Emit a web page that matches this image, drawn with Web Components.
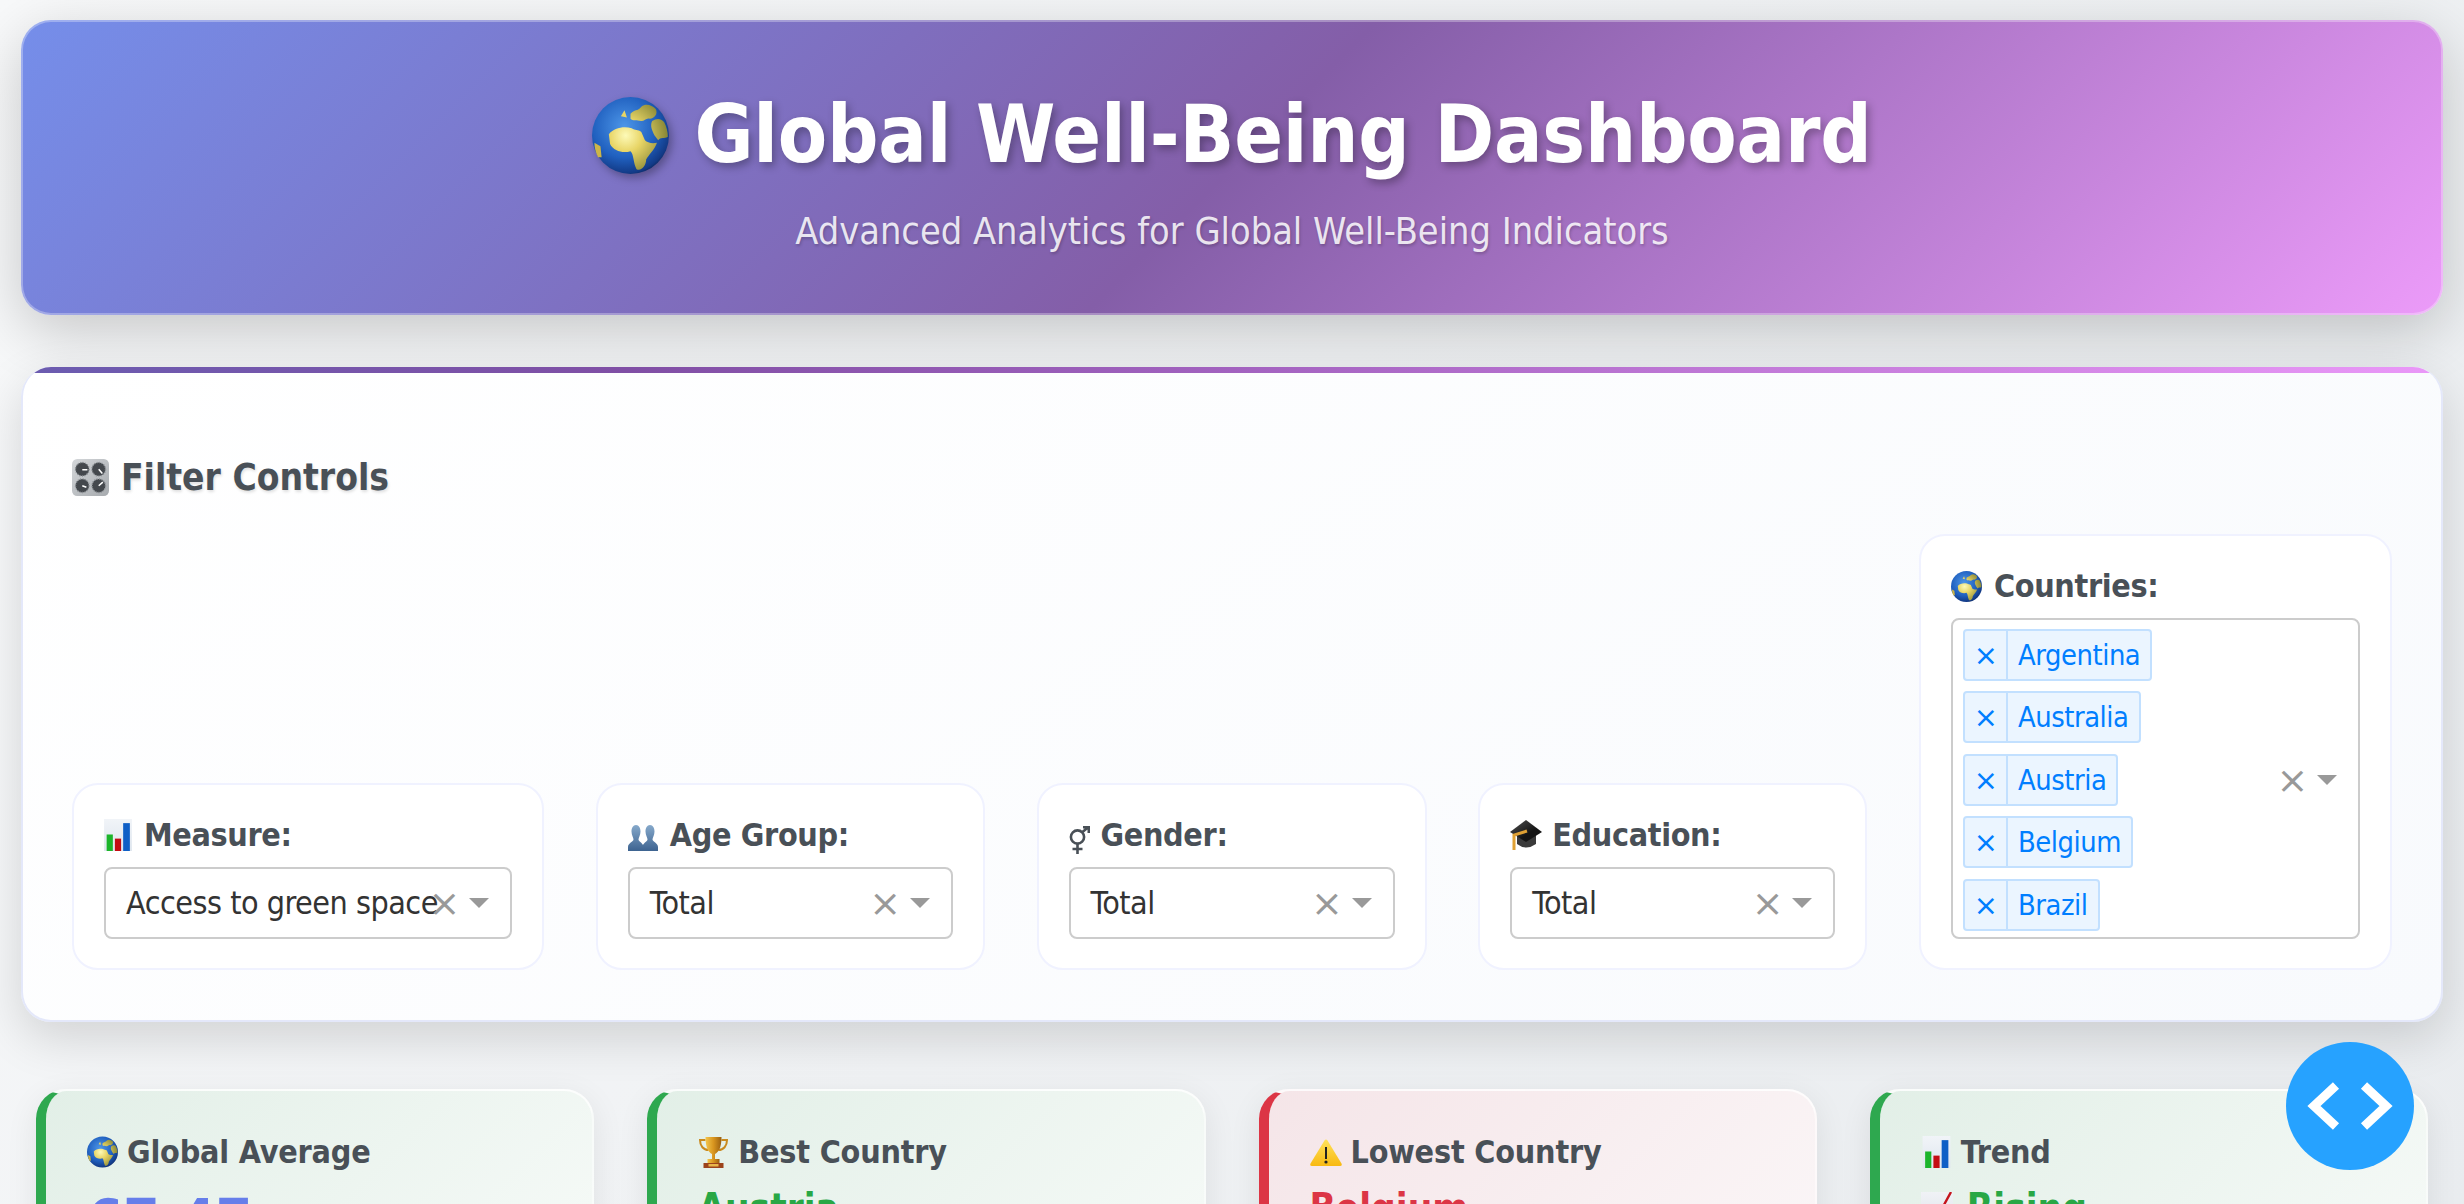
<!doctype html>
<html lang="en">
<head>
<meta charset="utf-8">
<title>Global Well-Being Dashboard</title>
<style>
html,body{margin:0;height:100%;overflow:hidden}
body{background:linear-gradient(135deg,#f8f9fa,#e9ecef);font-family:"DejaVu Sans Condensed","DejaVu Sans",sans-serif;font-stretch:condensed;color:#495057}
</style>
</head>
<body>
<wb-app>
  <wb-header title="Global Well-Being Dashboard" subtitle="Advanced Analytics for Global Well-Being Indicators"></wb-header>
  <wb-filters>
    <wb-field icon="bars" label="Measure:"><wb-select value="Access to green space"></wb-select></wb-field>
    <wb-field icon="people" label="Age Group:"><wb-select value="Total"></wb-select></wb-field>
    <wb-field icon="gender" label="Gender:"><wb-select value="Total"></wb-select></wb-field>
    <wb-field icon="cap" label="Education:"><wb-select value="Total"></wb-select></wb-field>
    <wb-field icon="globe" label="Countries:">
      <wb-multi>
        <wb-chip>Argentina</wb-chip>
        <wb-chip>Australia</wb-chip>
        <wb-chip>Austria</wb-chip>
        <wb-chip>Belgium</wb-chip>
        <wb-chip>Brazil</wb-chip>
      </wb-multi>
    </wb-field>
  </wb-filters>
  <wb-stats>
    <wb-stat icon="globe" label="Global Average" kind="good" big value="67.47"></wb-stat>
    <wb-stat icon="trophy" label="Best Country" kind="good" value="Austria"></wb-stat>
    <wb-stat icon="warning" label="Lowest Country" kind="bad" value="Belgium"></wb-stat>
    <wb-stat icon="bars" label="Trend" kind="good" value="Rising" value-icon="chart"></wb-stat>
  </wb-stats>
</wb-app>
<wb-fab></wb-fab>

<script>
// emoji drawn by hand, the installed emoji font looks too different from the reference
const ICONS = {
  globe: `<svg viewBox="0 0 64 64"><defs>
      <radialGradient id="s" cx=".42" cy=".38" r=".68"><stop offset="0" stop-color="#4d96e8"/><stop offset=".6" stop-color="#2060bf"/><stop offset=".9" stop-color="#123a86"/><stop offset="1" stop-color="#0b1f4e"/></radialGradient>
      <radialGradient id="l" gradientUnits="userSpaceOnUse" cx="28" cy="32" r="34"><stop offset="0" stop-color="#fdfab8"/><stop offset=".4" stop-color="#e8d566"/><stop offset="1" stop-color="#8c8a38"/></radialGradient>
    </defs>
    <circle cx="32" cy="32" r="32" fill="url(#s)"/>
    <path fill="url(#l)" d="M14 31C18 26 26 24 33 26C36 28 38 27 41 29L44 36C46 38 50 39 54 38C52 44 47 48 45 52C45 57 41 62 37 60C34 54 35 48 32 45C26 47 18 45 15 39Z"/>
    <path fill="url(#l)" d="M32 14C35 10 38 12 41 8C45 5 50 7 53 10C55 14 52 18 48 18C45 17 44 20 41 20C37 19 34 20 32 18Z"/>
    <path fill="url(#l)" d="M50 20C54 17 58 18 60 21C62 25 63 29 63 33C60 35 57 33 55 36L52 32C50 28 48 24 50 20Z"/>
    <path fill="#e8d566" d="M24 16L27 11L29 17Z"/>
    <path fill="#cdb548" d="M2 38L7 41L8 50L5 50C3 46 2 42 2 38Z"/>
  </svg>`,
  bars: `<svg viewBox="0 0 54 62"><defs><linearGradient id="b" x2="0" y2="1"><stop offset="0" stop-color="#f1f4f8"/><stop offset="1" stop-color="#dfe6ee"/></linearGradient></defs>
    <rect width="54" height="62" fill="url(#b)"/>
    <rect x="5" y="30" width="12" height="32" fill="#1cb52b"/>
    <rect x="21" y="38" width="12" height="24" fill="#c40d13"/>
    <rect x="37" y="8" width="13" height="54" fill="#0f5fc6"/>
  </svg>`,
  people: `<svg viewBox="0 0 60 52"><defs><linearGradient id="p" x2="0" y2="1"><stop offset="0" stop-color="#86a9cb"/><stop offset="1" stop-color="#3d6390"/></linearGradient></defs>
    <path fill="url(#p)" d="M16 0C22 0 25 6 25 13C25 20 21 26 21 29C21 33 31 36 31 44V52H0V44C0 36 11 33 11 29C11 26 7 20 7 13C7 6 10 0 16 0Z"/>
    <path fill="url(#p)" d="M44 0C50 0 53 6 53 13C53 20 49 26 49 29C49 33 60 36 60 44V52H29V44C29 36 39 33 39 29C39 26 35 20 35 13C35 6 38 0 44 0Z"/>
  </svg>`,
  gender: `<svg viewBox="0 0 21 28" fill="none" stroke="#495057" stroke-width="2.6">
    <circle cx="8.5" cy="11" r="6.6"/><path d="M8.5 17.5V28M3.5 23H13.5M13.5 6L19.5 1M14 1.2H19.8V7"/>
  </svg>`,
  cap: `<svg viewBox="0 0 32 31"><defs><linearGradient id="c" x2="1" y2="1"><stop offset="0" stop-color="#555"/><stop offset=".6" stop-color="#151515"/></linearGradient></defs>
    <path fill="#3a3a3a" d="M7 15V24Q16 31 26 24V15Z"/>
    <path fill="url(#c)" d="M16 0L32 12L16 22L0 12Z"/>
    <path fill="none" stroke="#e0a134" stroke-width="3" d="M17 11L4 15V30"/>
  </svg>`,
  trophy: `<svg viewBox="0 0 30 32"><defs><linearGradient id="t" x2="1"><stop offset="0" stop-color="#f4c64c"/><stop offset=".5" stop-color="#d8951f"/><stop offset="1" stop-color="#9a5f10"/></linearGradient></defs>
    <path fill="none" stroke="#c98a1e" stroke-width="2" d="M7 4H1.5C1.5 10 5 14 10 14M23 4H28.5C28.5 10 25 14 20 14"/>
    <path fill="url(#t)" d="M7 1H23C23 12 20 16 16.5 18V23H13.5V18C10 16 7 12 7 1Z"/>
    <rect x="9" y="23" width="12" height="4" fill="url(#t)"/>
    <rect x="5" y="27" width="20" height="5" fill="#9c431b"/>
    <rect x="10" y="28" width="10" height="2.5" fill="#e8b64a"/>
  </svg>`,
  warning: `<svg viewBox="0 0 32 27"><defs><linearGradient id="w" x2="0" y2="1"><stop offset="0" stop-color="#ffe25a"/><stop offset="1" stop-color="#f8b912"/></linearGradient></defs>
    <path fill="url(#w)" d="M14.5 1.5Q16 -.5 17.5 1.5L31.5 24.5Q32.5 27 30 27H2Q-.5 27 .5 24.5Z"/>
    <rect x="15" y="8" width="2" height="12" fill="#222"/><circle cx="16" cy="23" r="1.6" fill="#222"/>
  </svg>`,
  chart: `<svg viewBox="0 0 32 32"><defs><linearGradient id="h" x2="0" y2="1"><stop offset="0" stop-color="#f0f2f6"/><stop offset="1" stop-color="#dfe3ea"/></linearGradient></defs>
    <rect width="32" height="32" fill="url(#h)"/>
    <path fill="none" stroke="#c4141c" stroke-width="2.4" d="M2 27L11 17L18 22L30 0"/>
  </svg>`,
  knobs: `<svg viewBox="0 0 36 36"><defs><linearGradient id="k" x2="1" y2="1"><stop offset="0" stop-color="#d4d7da"/><stop offset="1" stop-color="#a6aaae"/></linearGradient></defs>
    <rect width="36" height="36" rx="5" fill="url(#k)"/>
    <g fill="#44484d" stroke="#8b8f94" stroke-width="1.4" stroke-dasharray="1 1.4">
      <circle cx="10" cy="10" r="6.6"/><circle cx="26" cy="10" r="6.6"/><circle cx="10" cy="26" r="6.6"/><circle cx="26" cy="26" r="6.6"/>
    </g>
    <path stroke="#fff" stroke-width="1.5" d="M10 10.5H15M26 10L29.5 14M10 26L14 27.5M26 26L30 22.5"/>
  </svg>`
};

class WbIcon extends HTMLElement {
  connectedCallback() {
    if (this.shadowRoot) return;
    const r = this.attachShadow({ mode: 'open' });
    r.innerHTML = `<style>
      :host{display:inline-block;flex:none;line-height:0}
      svg{display:block;width:100%;height:100%}
    </style>${ICONS[this.getAttribute('name')] || ''}`;
  }
}

class WbApp extends HTMLElement {
  constructor() {
    super();
    this.attachShadow({ mode: 'open' }).innerHTML = `<style>
      :host{display:flex;flex-direction:column;padding:20px 21px}
    </style><slot></slot>`;
  }
}

class WbHeader extends HTMLElement {
  connectedCallback() {
    if (this.shadowRoot) return;
    const r = this.attachShadow({ mode: 'open' });
    r.innerHTML = `<style>
      :host{display:block;box-sizing:border-box;height:295px;padding:65px 0 0;border-radius:30px;
        border:2px solid rgba(255,255,255,.3);background:linear-gradient(135deg,#758eea 0%,#845ea8 50%,#ec9bf9 100%) border-box;
        box-shadow:0 16px 60px rgba(0,0,0,.2);text-align:center;color:#fff}
      h1{display:flex;justify-content:center;align-items:center;gap:25px;margin:0 0 27px;font-size:80px;line-height:96px;font-weight:700;
        letter-spacing:-.2px;text-shadow:3px 4px 8px rgba(0,0,0,.3)}
      wb-icon{width:77px;height:77px;filter:drop-shadow(3px 4px 4px rgba(0,0,0,.3))}
      p{margin:0;font-size:37.6px;line-height:42px;color:rgba(255,255,255,.85);text-shadow:1px 2px 3px rgba(0,0,0,.2)}
    </style>
    <h1><wb-icon name="globe"></wb-icon><span>${this.getAttribute('title')}</span></h1>
    <p>${this.getAttribute('subtitle')}</p>`;
  }
}

class WbFilters extends HTMLElement {
  constructor() {
    super();
    this.attachShadow({ mode: 'open' }).innerHTML = `<style>
      :host{display:block;position:relative;overflow:hidden;box-sizing:border-box;margin-top:52px;padding:92px 49px 50px;
        border:2px solid #e4e8fa;border-top:0;border-radius:30px;background:linear-gradient(145deg,#fff,#f8fafd);
        box-shadow:0 16px 48px rgba(0,0,0,.14)}
      :host::before{content:"";position:absolute;left:0;right:0;top:0;height:6px;
        background:linear-gradient(90deg,#6b5cb0 0%,#804fa5 25%,#a262bf 50%,#ea98f8 100%)}
      h2{display:flex;align-items:center;gap:12px;margin:0 0 38px;font-size:36.8px;line-height:36px;font-weight:700;color:#495057;
        text-shadow:1px 2px 3px rgba(0,0,0,.12)}
      h2 wb-icon{width:37px;height:37px}
      .row{display:grid;align-items:end;grid-template-columns:472px 389px 390px 389px 473px;justify-content:space-between}
    </style>
    <h2><wb-icon name="knobs"></wb-icon><span>Filter Controls</span></h2>
    <div class="row"><slot></slot></div>`;
  }
}

class WbField extends HTMLElement {
  connectedCallback() {
    if (this.shadowRoot) return;
    const r = this.attachShadow({ mode: 'open' });
    r.innerHTML = `<style>
      :host{display:block;box-sizing:border-box;padding:30px 30px 29px;border:2px solid #f0f2ff;border-radius:26px;background:#fff}
      label{display:flex;align-items:center;gap:12px;height:40px;margin-bottom:12px;font-size:32px;letter-spacing:-.35px;font-weight:700;color:#495057}
      wb-icon{width:28px;height:32px}
      wb-icon[name=people]{width:30px;height:26px;margin-top:6px}
      wb-icon[name=gender]{width:21px;height:28px;margin:10px -1px 0 0}
      wb-icon[name=globe]{width:31px;height:31px}
      wb-icon[name=cap]{width:32px;height:31px;margin-right:-2px}
    </style>
    <label><wb-icon name="${this.getAttribute('icon')}"></wb-icon><span>${this.getAttribute('label')}</span></label>
    <slot></slot>`;
  }
}

const controlCss = `
  .clear{flex:none;width:37px;text-align:center;font-size:38px;line-height:38px;color:#999;font-family:"DejaVu Sans",sans-serif;font-stretch:normal;letter-spacing:0;margin:0 -2px 0 2px}
  .arrow{flex:none;width:0;height:0;margin:0 21px 0 8px;border:10px solid transparent;border-bottom:0;border-top-color:#999}
`;

class WbSelect extends HTMLElement {
  connectedCallback() {
    if (this.shadowRoot) return;
    const r = this.attachShadow({ mode: 'open' });
    r.innerHTML = `<style>
      :host{display:flex;align-items:center;box-sizing:border-box;height:72px;padding-left:20px;border:2px solid #ccc;border-radius:8px;background:#fff;color:#333;font-size:32px}
      .value{flex:1;min-width:0;white-space:nowrap;letter-spacing:-.5px}
      ${controlCss}
    </style>
    <div class="value">${this.getAttribute('value')}</div><span class="clear">×</span><span class="arrow"></span>`;
  }
}

class WbMulti extends HTMLElement {
  constructor() {
    super();
    this.attachShadow({ mode: 'open' }).innerHTML = `<style>
      :host{display:flex;align-items:center;box-sizing:border-box;height:321px;padding:9px 0 7px 10px;border:2px solid #ccc;border-radius:8px;background:#fff}
      .list{flex:1;display:flex;flex-direction:column;align-items:flex-start;gap:10.5px}
      ${controlCss}
    </style>
    <div class="list"><slot></slot></div><span class="clear">×</span><span class="arrow"></span>`;
  }
}

class WbChip extends HTMLElement {
  constructor() {
    super();
    this.attachShadow({ mode: 'open' }).innerHTML = `<style>
      :host{display:inline-flex;box-sizing:border-box;height:52px;border:2px solid #c2e0ff;border-radius:4px;background:#ebf5ff;color:#007eff;font-size:28.8px;letter-spacing:-.45px;line-height:48px}
      .x{width:41px;text-align:center;border-right:2px solid #c2e0ff;font-family:"DejaVu Sans",sans-serif;font-stretch:normal}
      .label{padding:0 10px}
    </style>
    <span class="x">×</span><span class="label"><slot></slot></span>`;
  }
}

class WbStats extends HTMLElement {
  constructor() {
    super();
    this.attachShadow({ mode: 'open' }).innerHTML = `<style>
      :host{display:grid;grid-template-columns:repeat(4,1fr);gap:53px;margin:67px 15px 0}
    </style><slot></slot>`;
  }
}

class WbStat extends HTMLElement {
  connectedCallback() {
    if (this.shadowRoot) return;
    const bad = this.getAttribute('kind') === 'bad';
    const big = this.hasAttribute('big');
    const vi = this.getAttribute('value-icon');
    const r = this.attachShadow({ mode: 'open' });
    r.innerHTML = `<style>
      :host{display:block;box-sizing:border-box;height:260px;padding:40px 30px 0 41px;
        border:2px solid rgba(255,255,255,.75);border-left:10px solid ${bad ? '#dc3545' : '#2ea84f'};border-radius:30px;
        background:linear-gradient(135deg,${bad ? '#f5e5e8,#fbf8f9' : '#e2efe7,#f8fbf9'});
        box-shadow:0 8px 32px rgba(0,0,0,.08)}
      h3{display:flex;align-items:center;gap:9px;height:42px;margin:0;font-size:32px;letter-spacing:-.2px;font-weight:700;color:#495057}
      h3 wb-icon{width:31px;height:32px}
      h3 wb-icon[name=warning]{width:32px;height:27px}
      .v{display:flex;align-items:center;gap:14px;font-weight:700;white-space:nowrap;
        color:${big ? '#667eea' : bad ? '#dc3545' : '#28a745'};
        font-size:${big ? 58 : 38.4}px;line-height:${big ? 70 : 46}px;margin-top:${big ? 13 : 12}px}
      .v wb-icon{width:32px;height:32px}
    </style>
    <h3><wb-icon name="${this.getAttribute('icon')}"></wb-icon><span>${this.getAttribute('label')}</span></h3>
    <div class="v">${vi ? `<wb-icon name="${vi}"></wb-icon>` : ''}<span>${this.getAttribute('value')}</span></div>`;
  }
}

class WbFab extends HTMLElement {
  constructor() {
    super();
    this.attachShadow({ mode: 'open' }).innerHTML = `<style>
      :host{position:fixed;right:50px;bottom:34px;width:128px;height:128px;border-radius:50%;background:#26a2ff}
      svg{display:block}
    </style>
    <svg width="128" height="128" viewBox="0 0 128 128" fill="none" stroke="#fff" stroke-width="9">
      <path d="M50 43.5L28 64L50 84.5M78 43.5L100 64L78 84.5"/>
    </svg>`;
  }
}

customElements.define('wb-icon', WbIcon);
customElements.define('wb-app', WbApp);
customElements.define('wb-header', WbHeader);
customElements.define('wb-filters', WbFilters);
customElements.define('wb-field', WbField);
customElements.define('wb-select', WbSelect);
customElements.define('wb-multi', WbMulti);
customElements.define('wb-chip', WbChip);
customElements.define('wb-stats', WbStats);
customElements.define('wb-stat', WbStat);
customElements.define('wb-fab', WbFab);
</script>
</body>
</html>
